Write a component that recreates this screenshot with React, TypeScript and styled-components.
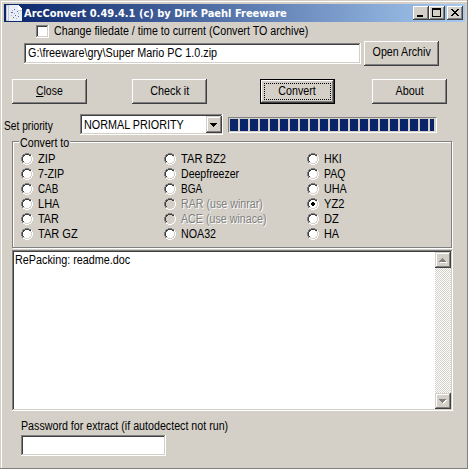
import React from "react";
import styled, { createGlobalStyle, css } from "styled-components";

const face = "#d4d0c8";
const shade = "#808080";
const dark = "#404040";
const navy = "#0a246a";

const Global = createGlobalStyle`
  body { margin: 0; background: ${face}; }
  * { box-sizing: border-box; }
`;

const raised = css`
  background: ${face};
  box-shadow: inset -1px -1px ${dark}, inset 1px 1px #fff, inset -2px -2px ${shade};
`;
const sunken = css`
  box-shadow: inset -1px -1px #fff, inset 1px 1px ${shade}, inset -2px -2px ${face},
    inset 2px 2px ${dark};
`;

const Window = styled.main`
  width: 468px;
  height: 469px;
  padding: 4px 3px 0 4px;
  overflow: hidden;
  display: flex;
  flex-direction: column;
  align-items: flex-start;
  background: ${face};
  box-shadow: inset -1px -1px ${shade}, inset 1px 1px ${face}, inset 2px 2px #fff;
  font: 12px/14px "Liberation Sans", Arial, sans-serif;
  color: #000;
  white-space: nowrap;
`;

/* Text narrowed to the proportions of the system dialog font. */
const Text = styled.span<{ $fit?: number; $center?: boolean }>`
  display: inline-block;
  transform: scaleX(${(p) => p.$fit ?? 0.89});
  transform-origin: ${(p) => (p.$center ? "center" : "left")} center;
`;

const TitleBar = styled.header`
  width: 461px;
  height: 18px;
  padding: 0 2px;
  display: flex;
  align-items: center;
  background: linear-gradient(90deg, ${navy}, #a6caf0);
`;
const Title = styled.h1`
  margin: 0 auto 0 2px;
  padding-top: 1px;
  font: bold 11px/17px "DejaVu Sans Condensed", "DejaVu Sans", sans-serif;
  color: #fff;
`;
const CaptionButton = styled.button<{ $gap?: boolean }>`
  ${raised}
  width: 16px;
  height: 14px;
  padding: 0;
  border: 0;
  margin-left: ${(p) => (p.$gap ? 2 : 0)}px;
  svg { display: block; }
`;

const CheckRow = styled.label`
  height: 20px;
  padding: 3px 0 0 32px;
  display: flex;
  gap: 5px;
`;
const CheckBox = styled.span`
  ${sunken}
  width: 13px;
  height: 13px;
  background-color: #fff;
`;
const CheckLabel = styled(Text)`
  margin-top: -1px;
`;

const ArchiveRow = styled.div`
  height: 22px;
  margin-left: 20px;
  display: flex;
  align-items: center;
  gap: 3px;
`;
const Field = styled.div<{ $w: number }>`
  ${sunken}
  width: ${(p) => p.$w}px;
  height: 21px;
  padding: 3px 4px;
  background-color: #fff;
`;
const PushButton = styled.button<{ $default?: boolean }>`
  ${raised}
  width: 75px;
  height: 25px;
  flex: none;
  padding: 0 0 2px;
  border: 0;
  display: flex;
  align-items: center;
  justify-content: center;
  font: inherit;
  color: #000;
  ${(p) =>
    p.$default &&
    css`
      padding: 0;
      border: 1px solid #000;
    `}
`;
const Focus = styled.span`
  width: 67px;
  height: 17px;
  padding-bottom: 2px;
  display: flex;
  align-items: center;
  justify-content: center;
  border: 1px dotted #000;
`;

const ButtonRow = styled.div`
  width: 435px;
  margin: 15px 0 0 8px;
  display: grid;
  grid-template-columns: 120px 128px 112px 75px;
`;

const PriorityRow = styled.div`
  height: 20px;
  margin-top: 10px;
  display: flex;
  align-items: flex-start;
`;
const PriorityLabel = styled.div`
  width: 76px;
  padding-top: 5px;
`;
const Combo = styled.div`
  ${sunken}
  width: 143px;
  height: 21px;
  padding: 2px 1px 2px 4px;
  display: flex;
  justify-content: space-between;
  align-items: center;
  background-color: #fff;
`;
const Square = styled.button<{ $tall?: boolean }>`
  background: ${face};
  box-shadow: inset -1px -1px ${dark}, inset 1px 1px ${face}, inset -2px -2px ${shade},
    inset 2px 2px #fff;
  width: 16px;
  height: ${(p) => (p.$tall ? 17 : 16)}px;
  padding: 0;
  border: 0;
  flex: none;
  svg { display: block; }
`;
const ComboText = styled(Text)`
  margin-top: 1px;
`;
const Progress = styled.div`
  width: 209px;
  height: 16px;
  margin: 3px 0 0 5px;
  padding: 1px;
  border: 1px solid;
  border-color: ${shade} #fff #fff ${shade};
`;
const ProgressFill = styled.div`
  width: 204px;
  height: 12px;
  background: repeating-linear-gradient(90deg, ${navy} 0 8px, ${face} 8px 10px);
`;

const Group = styled.fieldset`
  width: 440px;
  height: 107px;
  margin: 7px 0 0 8px;
  padding: 0;
  min-width: 0;
  border: 1px solid ${shade};
  box-shadow: 1px 1px #fff, inset 1px 1px #fff;
`;
const GroupCaption = styled.div`
  width: 51px;
  height: 14px;
  margin: -6px 0 0 6px;
  padding-left: 1px;
  background: ${face};
`;
const Options = styled.div`
  padding: 1px 0 0 8px;
  display: grid;
  grid-auto-flow: column;
  grid-template: repeat(6, 15px) / 143px 143px 120px;
`;
const Option = styled.label<{ $disabled?: boolean }>`
  display: flex;
  align-items: center;
  gap: 5px;
  svg { flex: none; }
  ${(p) =>
    p.$disabled &&
    css`
      color: ${shade};
      text-shadow: 1px 1px #fff;
    `}
`;

const Log = styled.section`
  ${sunken}
  width: 441px;
  height: 161px;
  margin: 2px 0 0 8px;
  padding: 2px;
  display: flex;
  background-color: #fff;
`;
const LogText = styled.div`
  flex: 1;
  padding: 1px 0 0 1px;
`;
const ScrollTrack = styled.div`
  width: 16px;
  display: flex;
  flex-direction: column;
  justify-content: space-between;
  background: repeating-conic-gradient(${face} 0 25%, #fff 0 50%) 0 0 / 2px 2px;
`;
const PasswordArea = styled.div`
  margin: 8px 0 0 17px;
  display: flex;
  flex-direction: column;
  gap: 2px;
`;

const colors: Record<string, string> = { d: shade, k: dark, l: face, h: "#ffffff", w: "#ffffff" };
const radioRows = [
  "....dddd....",
  "..ddkkkkdd..",
  ".dkkwwwwkkh.",
  ".dkwwwwwwlh.",
  "dkwwwwwwwwlh",
  "dkwwwwwwwwlh",
  "dkwwwwwwwwlh",
  "dkwwwwwwwwlh",
  ".dkwwwwwwlh.",
  ".dllwwwwllh.",
  "..hhllllhh..",
  "....hhhh....",
];

function Radio({ checked, disabled }: { checked?: boolean; disabled?: boolean }) {
  return (
    <svg width="12" height="12" shapeRendering="crispEdges">
      {radioRows.flatMap((row, y) =>
        [...row].map((c, x) =>
          c === "." ? null : (
            <rect key={`${x}-${y}`} x={x} y={y} width="1" height="1" fill={disabled && c === "w" ? face : colors[c]} />
          ),
        ),
      )}
      {checked && <path d="M5 4h2v1h1v2h-1v1h-2v-1h-1v-2h1z" fill="#000" />}
    </svg>
  );
}

function FileIcon() {
  return (
    <svg width="16" height="16" shapeRendering="crispEdges">
      <path d="M0 0h3v16h-3z" fill="#c4c8d4" />
      <path d="M1 1h1v14h-1z" fill="#eef0f6" />
      <path d="M3 0h9l4 4v12h-13z" fill="#e9edf8" />
      <path d="M12 0h1v1h1v1h1v1h1v2h-4z" fill="#fff" />
      <path d="M12 5h4v1h-4z" fill="#c8cfe0" />
      <path d="M8 4h1v1h-1zM5 7h2v1h-2zM11 6h1v1h-1zM9 10h1v1h-1zM7 12h1v1h-1zM12 11h1v1h-1z" fill="#5c6c98" />
      <path d="M6 5h1v1h-1zM12 8h1v1h-1zM8 8h1v1h-1zM5 10h1v1h-1zM10 13h1v1h-1z" fill="#a2aecb" />
    </svg>
  );
}

function Arrow({ up, disabled }: { up?: boolean; disabled?: boolean }) {
  const d = up ? "M7 6h1v1h1v1h1v1h1v1h-7v-1h1v-1h1v-1h1z" : "M4 6h7v1h-1v1h-1v1h-1v1h-1v-1h-1v-1h-1v-1h-1z";
  return (
    <svg width="16" height="16" shapeRendering="crispEdges">
      {disabled && <path d={d} fill="#fff" transform="translate(1 1)" />}
      <path d={d} fill={disabled ? shade : "#000"} />
    </svg>
  );
}

type Format = { name: string; fit?: number; disabled?: boolean };
const formats: Format[] = [
  { name: "ZIP", fit: 0.93 },
  { name: "7-ZIP" },
  { name: "CAB", fit: 0.82 },
  { name: "LHA", fit: 0.92 },
  { name: "TAR", fit: 0.9 },
  { name: "TAR GZ", fit: 0.92 },
  { name: "TAR BZ2", fit: 0.93 },
  { name: "Deepfreezer", fit: 0.88 },
  { name: "BGA", fit: 0.84 },
  { name: "RAR (use winrar)", disabled: true },
  { name: "ACE (use winace)", disabled: true },
  { name: "NOA32" },
  { name: "HKI", fit: 0.88 },
  { name: "PAQ", fit: 0.87 },
  { name: "UHA", fit: 0.9 },
  { name: "YZ2", fit: 0.93 },
  { name: "DZ", fit: 0.93 },
  { name: "HA", fit: 0.9 },
];

export default function App() {
  return (
    <Window>
      <Global />
      <TitleBar>
        <FileIcon />
        <Title>ArcConvert 0.49.4.1 (c) by Dirk Paehl Freeware</Title>
        <CaptionButton aria-label="Minimize">
          <svg width="16" height="14" shapeRendering="crispEdges"><path d="M4 9h6v2h-6z" /></svg>
        </CaptionButton>
        <CaptionButton aria-label="Maximize">
          <svg width="16" height="14" shapeRendering="crispEdges">
            <path fillRule="evenodd" d="M3 2h9v9h-9zM4 4h7v6h-7z" />
          </svg>
        </CaptionButton>
        <CaptionButton $gap aria-label="Close">
          <svg width="16" height="14" shapeRendering="crispEdges">
            <path d="M4 3h2v1h1v1h2v-1h1v-1h2v1h-1v1h-1v1h-1v1h1v1h1v1h1v1h-2v-1h-1v-1h-2v1h-1v1h-2v-1h1v-1h1v-1h1v-1h-1v-1h-1v-1h-1z" />
          </svg>
        </CaptionButton>
      </TitleBar>

      <CheckRow>
        <CheckBox />
        <CheckLabel>Change filedate / time to current (Convert TO archive)</CheckLabel>
      </CheckRow>

      <ArchiveRow>
        <Field $w={337}><Text $fit={0.9}>G:\freeware\gry\Super Mario PC 1.0.zip</Text></Field>
        <PushButton><Text $center>Open Archiv</Text></PushButton>
      </ArchiveRow>

      <ButtonRow>
        <PushButton><Text $center $fit={0.87}><u>C</u>lose</Text></PushButton>
        <PushButton><Text $center $fit={0.9}>Check it</Text></PushButton>
        <PushButton $default><Focus><Text $center>Convert</Text></Focus></PushButton>
        <PushButton><Text $center $fit={0.9}>About</Text></PushButton>
      </ButtonRow>

      <PriorityRow>
        <PriorityLabel><Text $fit={0.85}>Set priority</Text></PriorityLabel>
        <Combo>
          <ComboText $fit={0.9}>NORMAL PRIORITY</ComboText>
          <Square $tall aria-label="Open list"><Arrow /></Square>
        </Combo>
        <Progress><ProgressFill /></Progress>
      </PriorityRow>

      <Group>
        <GroupCaption><Text>Convert to</Text></GroupCaption>
        <Options>
          {formats.map((f) => (
            <Option key={f.name} $disabled={f.disabled}>
              <Radio checked={f.name === "YZ2"} disabled={f.disabled} />
              <Text $fit={f.fit}>{f.name}</Text>
            </Option>
          ))}
        </Options>
      </Group>

      <Log>
        <LogText><Text $fit={0.9}>RePacking: readme.doc</Text></LogText>
        <ScrollTrack>
          <Square aria-label="Scroll up"><Arrow up disabled /></Square>
          <Square aria-label="Scroll down"><Arrow disabled /></Square>
        </ScrollTrack>
      </Log>

      <PasswordArea>
        <Text>Password for extract (if autodectect not run)</Text>
        <Field $w={145} />
      </PasswordArea>
    </Window>
  );
}
